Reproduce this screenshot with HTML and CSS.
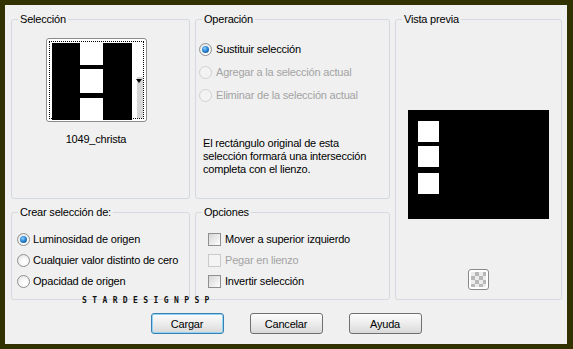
FILE: index.html
```html
<!DOCTYPE html>
<html lang="es">
<head>
    <meta charset="UTF-8">
    <title>Cargar selección desde canal alfa</title>
    <link rel="stylesheet" href="styles.css">
</head>
<body>
    <div class="dialog">
        <div class="panels">
            <fieldset class="group group-sel">
                <legend>Selección</legend>
                <div class="thumb">
                    <div class="thumb-focus">
                        <svg class="thumb-img" width="80" height="77" viewBox="0 0 80 77">
                            <rect width="80" height="77" fill="#000"/>
                            <rect x="28" y="0" width="23" height="22" fill="#fff"/>
                            <rect x="28" y="26" width="23" height="24" fill="#fff"/>
                            <rect x="28" y="55" width="23" height="22" fill="#fff"/>
                        </svg>
                        <div class="thumb-scroll">
                            <span class="thumb-arrow"></span>
                        </div>
                    </div>
                </div>
                <div class="thumb-name">1049_christa</div>
            </fieldset>

            <fieldset class="group group-op">
                <legend>Operación</legend>
                <div class="opt-list">
                    <div class="opt"><span class="radio checked"></span>Sustituir selección</div>
                    <div class="opt disabled"><span class="radio"></span>Agregar a la selección actual</div>
                    <div class="opt disabled"><span class="radio"></span>Eliminar de la selección actual</div>
                </div>
                <p class="note">
                    El rectángulo original de esta<br>
                    selección formará una intersección<br>
                    completa con el lienzo.
                </p>
            </fieldset>

            <fieldset class="group group-preview">
                <legend>Vista previa</legend>
                <svg class="preview-img" width="141" height="109" viewBox="0 0 141 109">
                    <rect width="141" height="109" fill="#000"/>
                    <rect x="10" y="11" width="21" height="21" fill="#fff"/>
                    <rect x="10" y="36" width="21" height="21" fill="#fff"/>
                    <rect x="10" y="63" width="21" height="21" fill="#fff"/>
                </svg>
                <div class="checker"><span class="checker-inner"></span></div>
            </fieldset>

            <fieldset class="group group-create">
                <legend>Crear selección de:</legend>
                <div class="opt-list">
                    <div class="opt"><span class="radio checked"></span>Luminosidad de origen</div>
                    <div class="opt"><span class="radio"></span>Cualquier valor distinto de cero</div>
                    <div class="opt"><span class="radio"></span>Opacidad de origen</div>
                </div>
            </fieldset>

            <fieldset class="group group-opts">
                <legend>Opciones</legend>
                <div class="opt-list">
                    <div class="opt"><span class="check"></span>Mover a superior izquierdo</div>
                    <div class="opt disabled"><span class="check"></span>Pegar en lienzo</div>
                    <div class="opt"><span class="check"></span>Invertir selección</div>
                </div>
            </fieldset>
        </div>

        <div class="buttons">
            <button class="btn default">Cargar</button>
            <button class="btn">Cancelar</button>
            <button class="btn">Ayuda</button>
        </div>

        <div class="watermark">STARDESIGNPSP</div>
    </div>
</body>
</html>
```

FILE: styles.css
```css
* {
    margin: 0;
    padding: 0;
    box-sizing: border-box;
}

body {
    background: #323200;
    font-family: "Liberation Sans", Arial, sans-serif;
    font-size: 11px;
    letter-spacing: -0.2px;
    color: #000;
    padding: 5px 6px 5px 5px;
}

.dialog {
    position: relative;
    width: 562px;
    height: 339px;
    background: #f0f0f0;
}

.panels {
    display: grid;
    grid-template-columns: 179px 195px 167px;
    grid-template-rows: 186px 94px;
    column-gap: 5px;
    row-gap: 7px;
    padding: 8px 0 0 6px;
}

.group {
    border: 1px solid #d3d9df;
    border-radius: 3px;
    min-width: 0;
    display: flex;
    flex-direction: column;
}

.group legend {
    margin-left: 6px;
    padding: 0 2px;
    line-height: 13px;
}

/* Selección */
.group-sel {
    align-items: center;
    padding-right: 9px;
}

.thumb {
    margin-top: 12px;
    width: 101px;
    height: 84px;
    border: 1px solid #8c8c8c;
    border-radius: 3px;
    background: #fff;
    padding: 2px;
}

.thumb-focus {
    height: 100%;
    border: 1px dotted #000;
    display: flex;
    padding: 1px 0 0 2px;
}

.thumb-scroll {
    position: relative;
    flex: 1;
    display: flex;
    justify-content: flex-end;
    align-items: flex-end;
}

.thumb-scroll::after {
    content: "";
    width: 6px;
    height: 41px;
    background: #d6d6d6;
}

.thumb-arrow {
    position: absolute;
    right: 1px;
    top: 36px;
    border-left: 3px solid transparent;
    border-right: 3px solid transparent;
    border-top: 4px solid #000;
}

.thumb-name {
    margin-top: 11px;
    line-height: 13px;
}

/* Option rows */
.opt-list {
    display: flex;
    flex-direction: column;
}

.opt {
    display: flex;
    align-items: center;
    height: 16px;
    white-space: nowrap;
}

.opt.disabled {
    color: #a3a3a3;
}

.group-op .opt-list {
    margin: 15px 0 0 3px;
    gap: 7px;
}

.group-op .radio {
    margin-right: 4px;
}

.group-create .opt-list {
    margin: 12px 0 0 5px;
    gap: 5px;
}

.group-create .radio {
    margin-right: 3px;
}

.group-opts .opt-list {
    margin: 12px 0 0 12px;
    gap: 5px;
}

.radio {
    position: relative;
    width: 13px;
    height: 13px;
    border-radius: 50%;
    border: 1px solid #8e9091;
    background: radial-gradient(circle at 60% 65%, #ffffff 20%, #dedede 100%);
    flex-shrink: 0;
}

.radio.checked::after {
    content: "";
    position: absolute;
    left: 2px;
    top: 2px;
    width: 7px;
    height: 7px;
    border-radius: 50%;
    background: radial-gradient(circle at 40% 35%, #8fd2ff 0%, #2a86d6 45%, #0b3f78 100%);
}

.opt.disabled .radio {
    border-color: #cfd0d0;
    background: #f3f3f3;
}

.check {
    width: 13px;
    height: 13px;
    margin-right: 4px;
    border: 1px solid #8f8f8f;
    background: linear-gradient(135deg, #d6d6d6 0%, #f2f2f2 70%, #ffffff 100%);
    flex-shrink: 0;
}

.opt.disabled .check {
    border-color: #cacaca;
    background: #f4f4f4;
}

.note {
    margin: 34px 0 0 7px;
    line-height: 13px;
}

/* Vista previa */
.group-preview {
    grid-row: 1 / 3;
    grid-column: 3;
    align-items: center;
}

.preview-img {
    display: block;
    margin-top: 84px;
}

.checker {
    margin-top: 50px;
    width: 21px;
    height: 21px;
    border: 1px solid #8a8a8a;
    border-radius: 3px;
    background: #fff;
    padding: 2px;
}

.checker-inner {
    display: block;
    width: 100%;
    height: 100%;
    background: repeating-conic-gradient(#b8b8b8 0 25%, #ececec 0 50%) 0 0 / 8px 8px;
}

/* Buttons */
.buttons {
    display: flex;
    justify-content: center;
    gap: 26px;
    margin-top: 13px;
}

.btn {
    width: 73px;
    height: 21px;
    font-family: inherit;
    font-size: 11px;
    letter-spacing: inherit;
    color: #000;
    border: 1px solid #707070;
    border-radius: 3px;
    background: linear-gradient(#fdfdfd 0%, #ececec 50%, #d9d9d9 100%);
}

.btn.default {
    border-color: #3c7fb1;
    box-shadow: inset 0 0 0 1px #8fd3f5;
}

.watermark {
    position: absolute;
    left: 77px;
    top: 292px;
    font-family: "DejaVu Sans Mono", monospace;
    font-size: 8px;
    font-weight: bold;
    line-height: 8px;
    letter-spacing: 5.4px;
    color: #111;
}
```
